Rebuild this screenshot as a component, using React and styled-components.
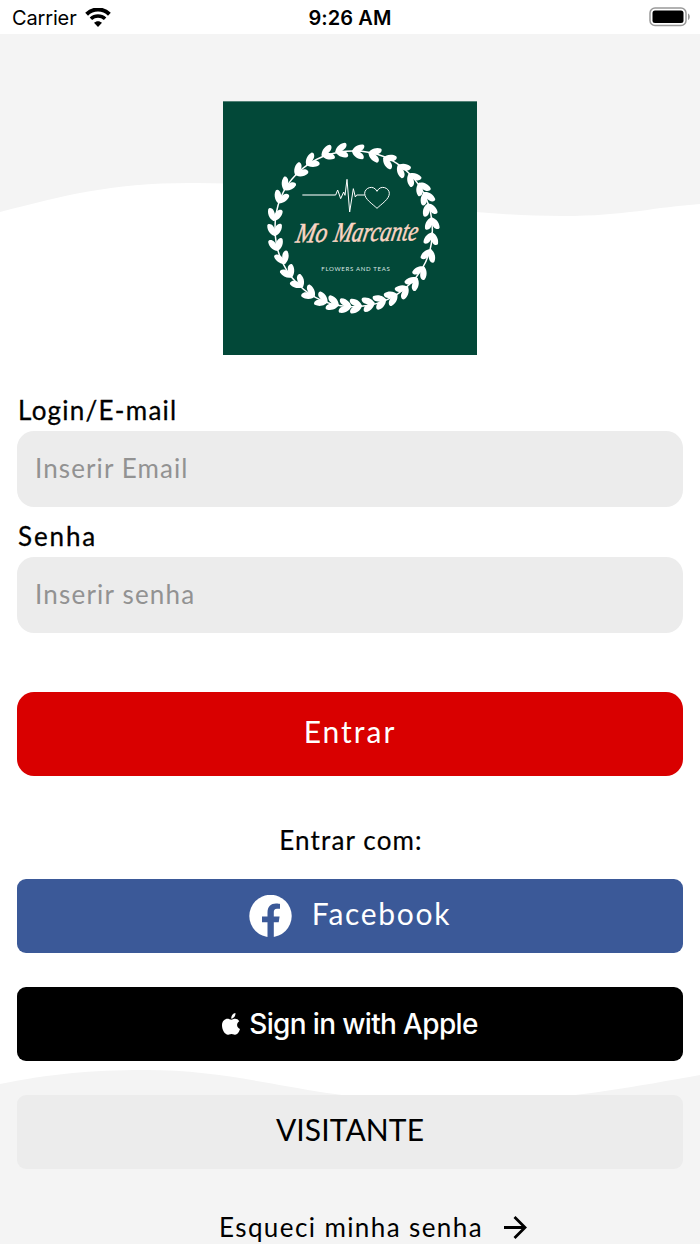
import React from 'react';
import styled, { createGlobalStyle } from 'styled-components';

const GlobalStyle = createGlobalStyle`
  * {
    box-sizing: border-box;
  }
  body {
    margin: 0;
    background: #fff;
    font-family: Lato, "Open Sans", sans-serif;
    color: #000;
  }
`

const Screen = styled.div`
  position: relative;
  width: 100%;
  height: 1244px;
  overflow: hidden;
  background: #fff;
`

const Waves = styled.svg`
  position: absolute;
  top: 0;
  left: 0;
`

const StatusBar = styled.header`
  position: relative;
  display: grid;
  grid-template-columns: 1fr auto 1fr;
  align-items: center;
  height: 34px;
  padding: 2px 12px 0;
  background: #fff;
  font-family: Inter, sans-serif;
`

const Carrier = styled.div`
  display: flex;
  align-items: center;
  gap: 8px;
  font-size: 20px;
  letter-spacing: -0.15px;
`

const Clock = styled.div`
  font-size: 20px;
  font-weight: 600;
  letter-spacing: 0.1px;
`

const Battery = styled.svg`
  justify-self: end;
  margin: -2px -3px 0 0;
`

const Content = styled.main`
  position: relative;
  display: flex;
  flex-direction: column;
  align-items: center;
  padding: 67px 17px 0;
`

const Logo = styled.svg`
  display: block;
  margin: 0 0 42px;
`

const Label = styled.label`
  align-self: stretch;
  height: 34px;
  padding-left: 1px;
  line-height: 27px;
  font-size: 26px;
  letter-spacing: ${props => props.spacing};
  -webkit-text-stroke: 0.3px #000;
`

const Input = styled.input`
  width: 100%;
  height: 76px;
  margin-bottom: 16px;
  padding: 0 17px 3px 18px;
  border: 0;
  border-radius: 17px;
  background: #ececec;
  font: 400 26px Lato, sans-serif;
  letter-spacing: ${props => props.spacing};
  outline: none;

  &::placeholder {
    color: #929292;
    opacity: 1;
  }
`

const Button = styled.button`
  display: flex;
  align-items: center;
  justify-content: center;
  gap: ${props => props.gap || '0'};
  width: 100%;
  height: ${props => props.height || '74px'};
  margin: ${props => props.margin || '0'};
  padding: 0;
  border: 0;
  border-radius: ${props => props.radius || '9px'};
  background: ${props => props.bg};
  color: ${props => props.color || '#fff'};
  font-family: ${props => props.font || 'Lato'}, sans-serif;
  font-size: ${props => props.size || '29px'};
  font-weight: ${props => props.weight || 400};
  letter-spacing: ${props => props.spacing || '0'};
`

const ButtonText = styled.span`
  padding-bottom: 6px;
`

const Hint = styled.p`
  margin: 0;
  height: 103px;
  padding: 49px 0 0 2px;
  line-height: 30px;
  font-size: 26px;
  letter-spacing: 1.15px;
  -webkit-text-stroke: 0.2px #000;
`

const Forgot = styled.a`
  display: flex;
  align-items: center;
  gap: 21px;
  padding: 43px 0 0 46px;
  line-height: 30px;
  font-size: 26px;
  letter-spacing: 1.4px;
`

const ForgotText = styled.span`
  padding-bottom: 1px;
`

// Every pair of leaves on the wreath, clockwise from the top
const LEAVES = [
    [408, 155], [457, 163], [500, 182], [541, 208], [572, 235], [600, 264],
    [614, 293], [622, 328], [630, 370], [628, 415], [621, 465], [597, 515],
    [574, 547], [544, 572], [510, 592], [475, 604], [440, 612], [402, 618],
    [370, 618], [333, 611], [300, 600], [263, 580], [230, 548], [200, 517],
    [182, 475], [163, 435], [158, 390], [158, 345], [176, 293], [196, 255],
    [233, 213], [268, 184], [316, 160], [358, 152]
]

const leafAngle = ([x, y]) => Math.atan2(y - 386, x - 395) * 180 / Math.PI + 90

const BrandLogo = () => (
    <Logo width="254" height="254" viewBox="3 3 762 762">
        <rect x="3" y="4" width="762" height="761" fill="#024838" />
        <path
            d="M395 153C530 153 628 258 631 385C634 517 528 620 393 620C262 620 160 517 159 386C158 256 258 153 395 153Z"
            fill="none"
            stroke="#fff"
            strokeWidth="4.5"
        />
        {LEAVES.map(point => (
            <g key={point.join()} transform={`translate(${point}) rotate(${leafAngle(point)})`} fill="#fff">
                <path d="M-18 2C-18-8-4-23 14-22C21-20 19-9 11-4C4 1-6 4-18 2Z" />
                <path d="M-18-2C-18 8-4 23 14 22C21 20 19 9 11 4C4-1-6-4-18-2Z" />
            </g>
        ))}
        <g fill="none" stroke="#fff" strokeLinejoin="round">
            <path d="M241 285H341" strokeWidth="4" opacity="0.7" />
            <path d="M341 285L347 270L356 296L365 276L369 286L375 238L383 336L394 266L400 291L404 285H428" strokeWidth="3" />
            <path d="M465 325C452 312 428 298 428 280C428 263 455 253 465 274C475 253 502 263 502 280C502 298 478 312 465 325Z" strokeWidth="3" />
        </g>
        <g
            transform="translate(0 424) rotate(-1 400 0) skewX(-12)"
            fill="#fbd5c3"
            stroke="#fbd5c3"
            strokeWidth="1.5"
            fontFamily="Liberation Serif, serif"
            fontSize="84"
            fontStyle="italic"
        >
            <text x="218" y="0" textLength="94" lengthAdjust="spacingAndGlyphs">Mo</text>
            <text x="332" y="0" textLength="252" lengthAdjust="spacingAndGlyphs">Marcante</text>
        </g>
        <text x="298" y="514" fill="#dce7e4" fontFamily="Lato, sans-serif" fontSize="18" textLength="205">
            FLOWERS AND TEAS
        </text>
    </Logo>
)

const App = () => (
    <>
        <GlobalStyle />
        <Screen>
            <Waves width="700" height="1244" viewBox="0 0 700 1244" fill="#f4f4f4">
                <path d="M0 34H700V204C655 207 625 216 563 216C420 216 330 182 190 183C110 183 62 196 0 212Z" />
                <path d="M0 1084C50 1074 90 1070 145 1070C245 1070 300 1097 415 1101C540 1105 610 1091 700 1075V1244H0Z" />
            </Waves>
            <StatusBar>
                <Carrier>
                    Carrier
                    <svg width="26" height="20" viewBox="0 1 26 20">
                        <path d="M1.6 7.2C8 0.9 18 0.9 24.4 7.2" fill="none" stroke="#000" strokeWidth="4" />
                        <path d="M5.9 11.8C10 8 16 8 20.1 11.8" fill="none" stroke="#000" strokeWidth="3.6" />
                        <path d="M9 15.8C11.4 13.7 14.6 13.7 17 15.8L13 20Z" />
                    </svg>
                </Carrier>
                <Clock>9:26 AM</Clock>
                <Battery width="42" height="20" viewBox="0 0 42 20">
                    <rect x="1" y="1" width="36" height="17.5" rx="5" fill="none" stroke="#999" strokeWidth="1.5" />
                    <rect x="3.5" y="3.5" width="31" height="12.5" rx="2.5" />
                    <path d="M39 6.5C41.4 7.5 41.4 12 39 13Z" fill="#999" />
                </Battery>
            </StatusBar>
            <Content>
                <BrandLogo />
                <Label spacing="1.25px">Login/E-mail</Label>
                <Input placeholder="Inserir Email" spacing="1.1px" />
                <Label spacing="1.9px">Senha</Label>
                <Input placeholder="Inserir senha" spacing="1.2px" />
                <Button bg="#d90000" height="84px" radius="17px" margin="43px 0 0" size="30px" spacing="2px">
                    <ButtonText>Entrar</ButtonText>
                </Button>
                <Hint>Entrar com:</Hint>
                <Button bg="#3b5998" gap="20px" size="30px" spacing="1.7px">
                    <svg width="43" height="43" viewBox="0 0 43 43">
                        <circle cx="21.5" cy="21" r="21.2" fill="#fff" />
                        <path d="M18.5 43V27.3H13V21.5H18.5V17.5C18.5 11.5 22 8.5 27 8.5C28.8 8.5 31 8.9 31 8.9V13.7H28C25.6 13.7 24.8 15.2 24.8 17V21.5H30.6L29.7 27.3H24.8V43Z" fill="#3b5998" />
                    </svg>
                    <ButtonText>Facebook</ButtonText>
                </Button>
                <Button bg="#000" font="Inter" weight="500" gap="9px" size="28px" spacing="-0.65px" margin="34px 0">
                    <svg width="18" height="22" viewBox="0 0 18 22" fill="#fff">
                        <path d="M9.3 5.7C8.9 2.8 10.7.5 13.4 0C13.8 2.8 11.7 5.4 9.3 5.7Z" />
                        <path d="M17.3 8.2C14 10.2 14.5 14.5 18 16C16.6 20.2 14.6 22.5 12 21.5C10.1 20.7 8.8 20.8 7 21.5C3.5 22.8 0 17.2 0 12.5C0 6.8 4.5 4.9 7.4 6.2C9 6.9 9.7 6.8 11 6.2C13.5 5.2 16 6 17.3 8.2Z" />
                    </svg>
                    Sign in with Apple
                </Button>
                <Button bg="#ececec" color="#000" size="30px" spacing="0.1px">
                    <ButtonText>VISITANTE</ButtonText>
                </Button>
                <Forgot>
                    <ForgotText>Esqueci minha senha</ForgotText>
                    <svg width="23" height="23" viewBox="0 0 23 23" fill="none" stroke="#000" strokeWidth="2.8">
                        <path d="M0 11.5H21M10.5 1L21 11.5L10.5 22" />
                    </svg>
                </Forgot>
            </Content>
        </Screen>
    </>
)

export default App;
